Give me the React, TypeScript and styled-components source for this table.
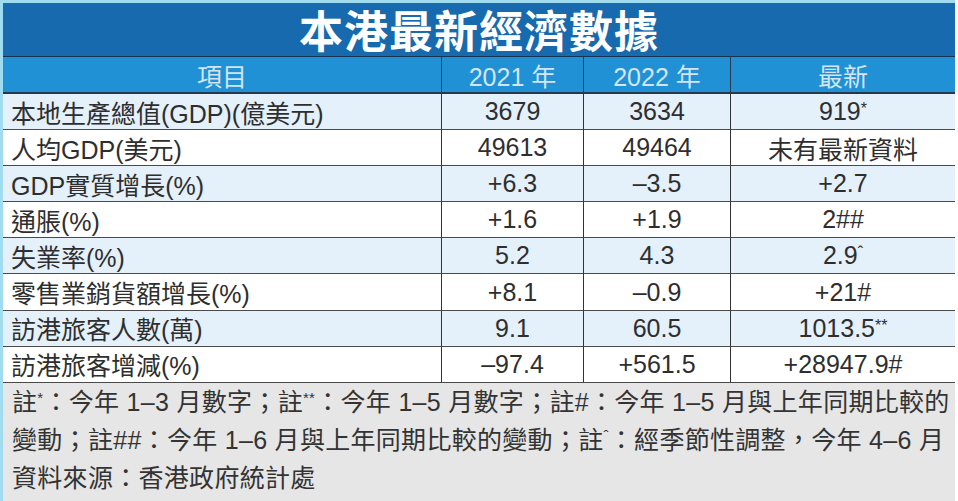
import React from "react";
import styled, { createGlobalStyle } from "styled-components";

const GlobalStyle = createGlobalStyle`
  html, body {
    margin: 0;
    padding: 0;
    background: #ffffff;
  }
  body {
    font-family: "Liberation Sans", "Noto Sans CJK TC", sans-serif;
  }
`;

const Board = styled.div`
  width: 952px;
  height: 498px;
  border-top: 3px solid #9fdcef;
  border-left: 3px solid #9fdcef;
  display: flex;
  flex-direction: column;
  background: #e6e6e6;
`;

const TitleBar = styled.div`
  height: 54px;
  background: #176aae;
  border-bottom: 1px solid #16324f;
  display: flex;
  align-items: center;
  justify-content: center;
  color: #ffffff;
  font-size: 44px;
  font-weight: 700;
  letter-spacing: 1px;
  padding-bottom: 2px;
  box-sizing: border-box;
`;

const Grid = styled.div`
  display: grid;
  grid-template-columns: 439px 142px 147px 224px;
`;

const HeadCell = styled.div<{ $last?: boolean }>`
  height: 35px;
  background: #2191d6;
  border-bottom: 2px solid #25384c;
  border-right: ${(p) => (p.$last ? "none" : "1px solid #26384a")};
  color: #d3e5f3;
  font-size: 25px;
  display: flex;
  align-items: center;
  justify-content: center;
`;

const Cell = styled.div<{ $shade: boolean; $label?: boolean; $last?: boolean }>`
  height: 35.1px;
  background: ${(p) => (p.$shade ? "#e4f0fa" : "#ffffff")};
  border-bottom: 1.5px solid #4a4a4a;
  border-right: ${(p) => (p.$last ? "none" : "1px solid #333333")};
  color: #2e2e2e;
  font-size: 25px;
  display: flex;
  align-items: center;
  justify-content: ${(p) => (p.$label ? "flex-start" : "center")};
  padding-left: ${(p) => (p.$label ? "8px" : "0")};
  white-space: nowrap;
`;

const Sup = styled.span`
  font-size: 16px;
  align-self: flex-start;
  margin-top: 6px;
`;

const Notes = styled.div`
  flex: 1;
  padding: 0 0 0 9px;
  color: #333333;
  font-size: 25px;
  line-height: 38px;
  letter-spacing: 0.3px;
  white-space: nowrap;
`;

const NoteSup = styled.span`
  font-size: 15px;
  line-height: 0;
  vertical-align: 8px;
`;

type Row = { label: string; a: string; b: string; latest: React.ReactNode };

const rows: Row[] = [
  { label: "本地生產總值(GDP)(億美元)", a: "3679", b: "3634", latest: <>919<Sup>*</Sup></> },
  { label: "人均GDP(美元)", a: "49613", b: "49464", latest: "未有最新資料" },
  { label: "GDP實質增長(%)", a: "+6.3", b: "–3.5", latest: "+2.7" },
  { label: "通脹(%)", a: "+1.6", b: "+1.9", latest: "2##" },
  { label: "失業率(%)", a: "5.2", b: "4.3", latest: <>2.9<Sup>ˆ</Sup></> },
  { label: "零售業銷貨額增長(%)", a: "+8.1", b: "–0.9", latest: "+21#" },
  { label: "訪港旅客人數(萬)", a: "9.1", b: "60.5", latest: <>1013.5<Sup>**</Sup></> },
  { label: "訪港旅客增減(%)", a: "–97.4", b: "+561.5", latest: "+28947.9#" },
];

const App: React.FC = () => {
  return (
    <>
      <GlobalStyle />
      <Board>
        <TitleBar>本港最新經濟數據</TitleBar>
        <Grid>
          <HeadCell>項目</HeadCell>
          <HeadCell>2021 年</HeadCell>
          <HeadCell>2022 年</HeadCell>
          <HeadCell $last>最新</HeadCell>
          {rows.map((r, i) => {
            const shade = i % 2 === 0;
            return (
              <React.Fragment key={r.label}>
                <Cell $shade={shade} $label>{r.label}</Cell>
                <Cell $shade={shade}>{r.a}</Cell>
                <Cell $shade={shade}>{r.b}</Cell>
                <Cell $shade={shade} $last>{r.latest}</Cell>
              </React.Fragment>
            );
          })}
        </Grid>
        <Notes>
          註<NoteSup>*</NoteSup>：今年 1–3 月數字；註<NoteSup>**</NoteSup>：今年 1–5 月數字；註#：今年 1–5 月與上年同期比較的
          <br />
          變動；註##：今年 1–6 月與上年同期比較的變動；註<NoteSup>ˆ</NoteSup>：經季節性調整，今年 4–6 月
          <br />
          資料來源：香港政府統計處
        </Notes>
      </Board>
    </>
  );
};

export default App;
